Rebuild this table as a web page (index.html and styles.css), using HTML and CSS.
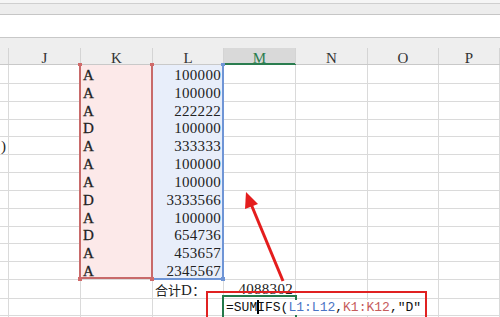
FILE: index.html
```html
<!DOCTYPE html>
<html>
<head>
<meta charset="utf-8">
<link rel="stylesheet" href="styles.css">
</head>
<body>
<div class="app">
  <div class="cap"></div>
  <div class="toolbar"></div>
  <div class="fbar"></div>
  <div class="hdr">
    <div class="c"></div>
    <div class="c">J</div>
    <div class="c">K</div>
    <div class="c">L</div>
    <div class="c sel">M</div>
    <div class="c">N</div>
    <div class="c">O</div>
    <div class="c">P</div>
  </div>
  <div class="grid">
    <div class="row"><div class="c"></div><div class="c"></div><div class="c k">A</div><div class="c l">100000</div><div class="c"></div><div class="c"></div><div class="c"></div><div class="c"></div></div>
    <div class="row"><div class="c"></div><div class="c"></div><div class="c k">A</div><div class="c l">100000</div><div class="c"></div><div class="c"></div><div class="c"></div><div class="c"></div></div>
    <div class="row"><div class="c"></div><div class="c"></div><div class="c k">A</div><div class="c l">222222</div><div class="c"></div><div class="c"></div><div class="c"></div><div class="c"></div></div>
    <div class="row"><div class="c"></div><div class="c"></div><div class="c k">D</div><div class="c l">100000</div><div class="c"></div><div class="c"></div><div class="c"></div><div class="c"></div></div>
    <div class="row"><div class="c cut">)</div><div class="c"></div><div class="c k">A</div><div class="c l">333333</div><div class="c"></div><div class="c"></div><div class="c"></div><div class="c"></div></div>
    <div class="row"><div class="c"></div><div class="c"></div><div class="c k">A</div><div class="c l">100000</div><div class="c"></div><div class="c"></div><div class="c"></div><div class="c"></div></div>
    <div class="row"><div class="c"></div><div class="c"></div><div class="c k">A</div><div class="c l">100000</div><div class="c"></div><div class="c"></div><div class="c"></div><div class="c"></div></div>
    <div class="row"><div class="c"></div><div class="c"></div><div class="c k">D</div><div class="c l">3333566</div><div class="c"></div><div class="c"></div><div class="c"></div><div class="c"></div></div>
    <div class="row"><div class="c"></div><div class="c"></div><div class="c k">A</div><div class="c l">100000</div><div class="c"></div><div class="c"></div><div class="c"></div><div class="c"></div></div>
    <div class="row"><div class="c"></div><div class="c"></div><div class="c k">D</div><div class="c l">654736</div><div class="c"></div><div class="c"></div><div class="c"></div><div class="c"></div></div>
    <div class="row"><div class="c"></div><div class="c"></div><div class="c k">A</div><div class="c l">453657</div><div class="c"></div><div class="c"></div><div class="c"></div><div class="c"></div></div>
    <div class="row"><div class="c"></div><div class="c"></div><div class="c k">A</div><div class="c l">2345567</div><div class="c"></div><div class="c"></div><div class="c"></div><div class="c"></div></div>
    <div class="row"><div class="c"></div><div class="c"></div><div class="c"></div><div class="c label"><span class="cjk">合计</span>D<span class="cjk">：</span></div><div class="c num">4088302</div><div class="c"></div><div class="c"></div><div class="c"></div></div>
    <div class="row"><div class="c"></div><div class="c"></div><div class="c"></div><div class="c"></div><div class="c active"><span class="formula">=SUM<span class="caret"></span>IFS(<span class="ref-l">L1:L12</span>,<span class="ref-k">K1:K12</span>,"D"</span></div><div class="c"></div><div class="c"></div><div class="c"></div></div>
    <div class="row"><div class="c"></div><div class="c"></div><div class="c"></div><div class="c"></div><div class="c"></div><div class="c"></div><div class="c"></div><div class="c"></div></div>
  </div>

  <div class="range-k"></div>
  <div class="range-l"></div>
  <div class="hnd red t1"></div>
  <div class="hnd red t2"></div>
  <div class="hnd red b1"></div>
  <div class="hnd red b2"></div>
  <div class="hnd blue t3"></div>
  <div class="hnd blue b3"></div>

  <div class="callout"></div>
  <svg class="arrow" width="500" height="317" viewBox="0 0 500 317">
    <line x1="283" y1="281" x2="251" y2="204" stroke="#e41d1d" stroke-width="3"/>
    <polygon points="246,192 258,204 245,209" fill="#e41d1d"/>
  </svg>
</div>
</body>
</html>
```
FILE: styles.css
```css
html, body {
  margin: 0;
  padding: 0;
  background: #ffffff;
}
body {
  font-family: "Liberation Serif", "Noto Sans CJK SC", serif;
  color: #222;
}
.app {
  position: relative;
  width: 500px;
  height: 317px;
  overflow: hidden;
}
.cap {
  height: 3px;
  background: #f5f5f5;
}
.toolbar {
  height: 10px;
  background: #ededed;
  border-top: 1px solid #cfcfcf;
  border-bottom: 1px solid #c6c6c6;
}
.fbar {
  height: 22px;
  background: #ffffff;
  border-bottom: 1px solid #c8c8c8;
}
.hdr {
  height: 26px;
  background: #eeeeee;
  border-bottom: 1px solid #c9c9c9;
  display: grid;
  grid-template-columns: 9px 72px 72px 71px 72px 72px 71px 1fr;
  align-items: end;
}
.hdr .c {
  box-sizing: border-box;
  height: 16px;
  border-right: 1px solid #d4d4d4;
  text-align: center;
  font-size: 15px;
  line-height: 16px;
  padding-top: 2px;
  color: #333;
}
.hdr .c.sel {
  background: #d9d9d9;
  color: #2b7d4f;
  box-shadow: inset 0 -1px 0 #2b7d4f, 0 1px 0 #2b7d4f;
}
.row {
  display: grid;
  grid-template-columns: 9px 72px 72px 71px 72px 72px 71px 1fr;
  height: 17.83px;
}
.row .c {
  box-sizing: border-box;
  border-right: 1px solid #dadada;
  border-bottom: 1px solid #dadada;
  font-size: 15px;
  line-height: 15px;
  padding: 3px 3px 0 3px;
  white-space: nowrap;
  letter-spacing: 0.3px;
  min-width: 0;
}
.row .c.cut {
  padding: 3px 0 0 1px;
  text-align: left;
  letter-spacing: 0;
}
.row .c.k {
  background: #fce9e9;
  padding-left: 2px;
  color: #222;
  -webkit-text-stroke: 0.3px #222;
}
.row .c.l {
  background: #e8eefa;
  text-align: right;
  padding-right: 2px;
}
.row .c.label {
  padding-left: 2px;
}
.cjk {
  font-family: "Noto Sans CJK SC", sans-serif;
  font-size: 13px;
  letter-spacing: 0;
}
.row .c.num {
  text-align: right;
  padding-right: 2px;
}
.row .c.active {
  position: relative;
  padding-left: 2px;
  padding-top: 2px;
}
.row .c.active::before {
  content: "";
  position: absolute;
  left: -2px;
  top: -2px;
  right: -2px;
  height: 24px;
  border: 2px solid #23794a;
}
.formula {
  position: relative;
  z-index: 2;
  background: #ffffff;
  font-family: "Liberation Mono", monospace;
  font-size: 13px;
  letter-spacing: 0;
  line-height: 15px;
  color: #111;
}
.caret {
  display: inline-block;
  width: 0;
  height: 14px;
  border-left: 2px solid #000;
  margin-right: -2px;
  vertical-align: -3px;
}
.ref-l {
  color: #4a74c4;
}
.ref-k {
  color: #c65b5b;
}
.range-k {
  position: absolute;
  left: 79px;
  top: 65px;
  width: 70px;
  height: 212px;
  border: 2px solid #c86a6a;
  border-top: none;
  z-index: 3;
}
.range-l {
  position: absolute;
  left: 153px;
  top: 65px;
  width: 69px;
  height: 213px;
  border-right: 2px solid #6f95d6;
  border-bottom: 2px solid #6f95d6;
  z-index: 3;
}
.hnd {
  position: absolute;
  width: 4px;
  height: 4px;
  z-index: 4;
}
.hnd.red { background: #d06a6a; }
.hnd.blue { background: #6f95d6; }
.t1 { left: 78px; top: 63px; height: 3px; }
.t2 { left: 150px; top: 63px; height: 3px; }
.t3 { left: 221px; top: 63px; height: 3px; }
.b1 { left: 78px; top: 277px; }
.b2 { left: 150px; top: 277px; }
.b3 { left: 221px; top: 277px; }
.callout {
  position: absolute;
  left: 206px;
  top: 291px;
  width: 217px;
  height: 30px;
  border: 2px solid #e02121;
  z-index: 5;
}
.arrow {
  position: absolute;
  left: 0;
  top: 0;
  z-index: 6;
}
```
